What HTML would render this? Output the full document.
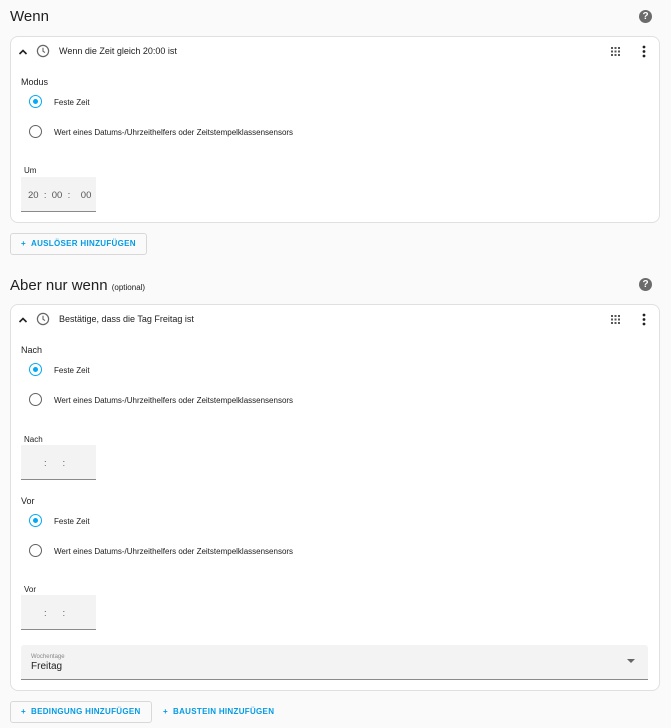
<!DOCTYPE html><html><head><style>
body{margin:0;background:#fafafa;font-family:"Liberation Sans",sans-serif;color:#212121;width:671px;height:728px;position:relative;overflow:hidden}
.a{position:absolute;white-space:nowrap}
.card{position:absolute;left:10px;width:648px;background:#fff;border:1px solid #e0e0e0;border-radius:8px}
.h{font-size:15px;color:#212121}
.t{font-size:9px}
.sm{font-size:8px}
.radio{position:absolute;width:11px;height:11px;border:1.5px solid #616161;border-radius:50%}
.radio.on{border-color:#03a9f4}
.radio.on::after{content:"";position:absolute;left:3px;top:3px;width:5px;height:5px;border-radius:50%;background:#03a9f4}
.field{position:absolute;width:75px;height:34px;background:#f3f3f3;border-bottom:1px solid #8a8a8a;font-size:9.5px;color:#555}
.btn{position:absolute;height:20px;border:1px solid #d8d8d8;border-radius:3px;background:#fafafa;color:#039be5;font-size:8px;font-weight:bold;letter-spacing:.3px;line-height:20px}
.q{position:absolute;width:13px;height:13px;border-radius:50%;background:#6b6b6b;color:#fff;font-size:10px;font-weight:bold;text-align:center;line-height:13px}
</style></head><body>
<div class="a h" style="left:10px;top:8px">Wenn</div>
<div class="q" style="left:639px;top:10px">?</div>
<div class="card" style="top:36px;height:185px"></div>
<svg class="a" style="left:17px;top:46px" width="12" height="12"><path d="M2.5 8 L6 4.5 L9.5 8" stroke="#222" stroke-width="1.6" fill="none"/></svg>
<svg class="a" style="left:36px;top:44px" width="14" height="14"><circle cx="7" cy="7" r="5.6" stroke="#666" stroke-width="1.2" fill="none"/><path d="M7 3.8V7.2L9 8.6" stroke="#666" stroke-width="1.1" fill="none"/></svg>
<div class="a t" style="left:59px;top:46px">Wenn die Zeit gleich 20:00 ist</div>
<svg class="a" style="left:611px;top:47px" width="9" height="9"><g fill="#555"><rect x="0" y="0" width="2" height="2"/><rect x="3.5" y="0" width="2" height="2"/><rect x="7" y="0" width="2" height="2"/><rect x="0" y="3.5" width="2" height="2"/><rect x="3.5" y="3.5" width="2" height="2"/><rect x="7" y="3.5" width="2" height="2"/><rect x="0" y="7" width="2" height="2"/><rect x="3.5" y="7" width="2" height="2"/><rect x="7" y="7" width="2" height="2"/></g></svg>
<svg class="a" style="left:642px;top:45px" width="4" height="13"><g fill="#222"><circle cx="2" cy="2" r="1.4"/><circle cx="2" cy="6.5" r="1.4"/><circle cx="2" cy="11" r="1.4"/></g></svg>
<div class="a t" style="left:21px;top:77px">Modus</div>
<div class="radio on" style="left:29px;top:95px"></div><div class="a sm" style="left:54px;top:98px">Feste Zeit</div>
<div class="radio" style="left:29px;top:125px"></div><div class="a sm" style="left:54px;top:128px">Wert eines Datums-/Uhrzeithelfers oder Zeitstempelklassensensors</div>
<div class="a sm" style="left:24px;top:166px">Um</div>
<div class="field" style="left:21px;top:177px"><span class="a" style="left:7px;top:13px">20 &nbsp;: &nbsp;00 &nbsp;: &nbsp;&nbsp;&nbsp;00</span></div>
<div class="btn" style="left:10px;top:233px;width:135px"><span style="margin-left:10px">+ &nbsp;AUSLÖSER HINZUFÜGEN</span></div>

<div class="a h" style="left:10px;top:277px">Aber nur wenn <span style="font-size:8px">(optional)</span></div>
<div class="q" style="left:639px;top:278px">?</div>
<div class="card" style="top:304px;height:385px"></div>
<svg class="a" style="left:17px;top:314px" width="12" height="12"><path d="M2.5 8 L6 4.5 L9.5 8" stroke="#222" stroke-width="1.6" fill="none"/></svg>
<svg class="a" style="left:36px;top:312px" width="14" height="14"><circle cx="7" cy="7" r="5.6" stroke="#666" stroke-width="1.2" fill="none"/><path d="M7 3.8V7.2L9 8.6" stroke="#666" stroke-width="1.1" fill="none"/></svg>
<div class="a t" style="left:59px;top:314px">Bestätige, dass die Tag Freitag ist</div>
<svg class="a" style="left:611px;top:315px" width="9" height="9"><g fill="#555"><rect x="0" y="0" width="2" height="2"/><rect x="3.5" y="0" width="2" height="2"/><rect x="7" y="0" width="2" height="2"/><rect x="0" y="3.5" width="2" height="2"/><rect x="3.5" y="3.5" width="2" height="2"/><rect x="7" y="3.5" width="2" height="2"/><rect x="0" y="7" width="2" height="2"/><rect x="3.5" y="7" width="2" height="2"/><rect x="7" y="7" width="2" height="2"/></g></svg>
<svg class="a" style="left:642px;top:313px" width="4" height="13"><g fill="#222"><circle cx="2" cy="2" r="1.4"/><circle cx="2" cy="6.5" r="1.4"/><circle cx="2" cy="11" r="1.4"/></g></svg>
<div class="a t" style="left:21px;top:345px">Nach</div>
<div class="radio on" style="left:29px;top:363px"></div><div class="a sm" style="left:54px;top:366px">Feste Zeit</div>
<div class="radio" style="left:29px;top:393px"></div><div class="a sm" style="left:54px;top:396px">Wert eines Datums-/Uhrzeithelfers oder Zeitstempelklassensensors</div>
<div class="a sm" style="left:24px;top:435px">Nach</div>
<div class="field" style="left:21px;top:445px"><span class="a" style="left:23px;top:13px">: &nbsp;&nbsp;&nbsp;&nbsp;&nbsp;:</span></div>
<div class="a t" style="left:21px;top:496px">Vor</div>
<div class="radio on" style="left:29px;top:514px"></div><div class="a sm" style="left:54px;top:517px">Feste Zeit</div>
<div class="radio" style="left:29px;top:544px"></div><div class="a sm" style="left:54px;top:547px">Wert eines Datums-/Uhrzeithelfers oder Zeitstempelklassensensors</div>
<div class="a sm" style="left:24px;top:585px">Vor</div>
<div class="field" style="left:21px;top:595px"><span class="a" style="left:23px;top:13px">: &nbsp;&nbsp;&nbsp;&nbsp;&nbsp;:</span></div>
<div class="a" style="left:21px;top:645px;width:627px;height:34px;background:#f3f3f3;border-bottom:1px solid #8a8a8a;border-radius:3px 3px 0 0">
<div class="a" style="left:10px;top:9px;font-size:6px;color:#888">Wochentage</div>
<div class="a" style="left:10px;top:16px;font-size:10px;color:#222">Freitag</div>
<svg class="a" style="left:606px;top:14px" width="8" height="5"><path d="M0 0H8L4 4Z" fill="#666"/></svg></div>
<div class="btn" style="left:10px;top:701px;width:140px"><span style="margin-left:10px">+ &nbsp;BEDINGUNG HINZUFÜGEN</span></div>
<div class="a" style="left:163px;top:707px;font-size:8px;font-weight:bold;color:#039be5;letter-spacing:.3px">+ &nbsp;BAUSTEIN HINZUFÜGEN</div>
</body></html>
